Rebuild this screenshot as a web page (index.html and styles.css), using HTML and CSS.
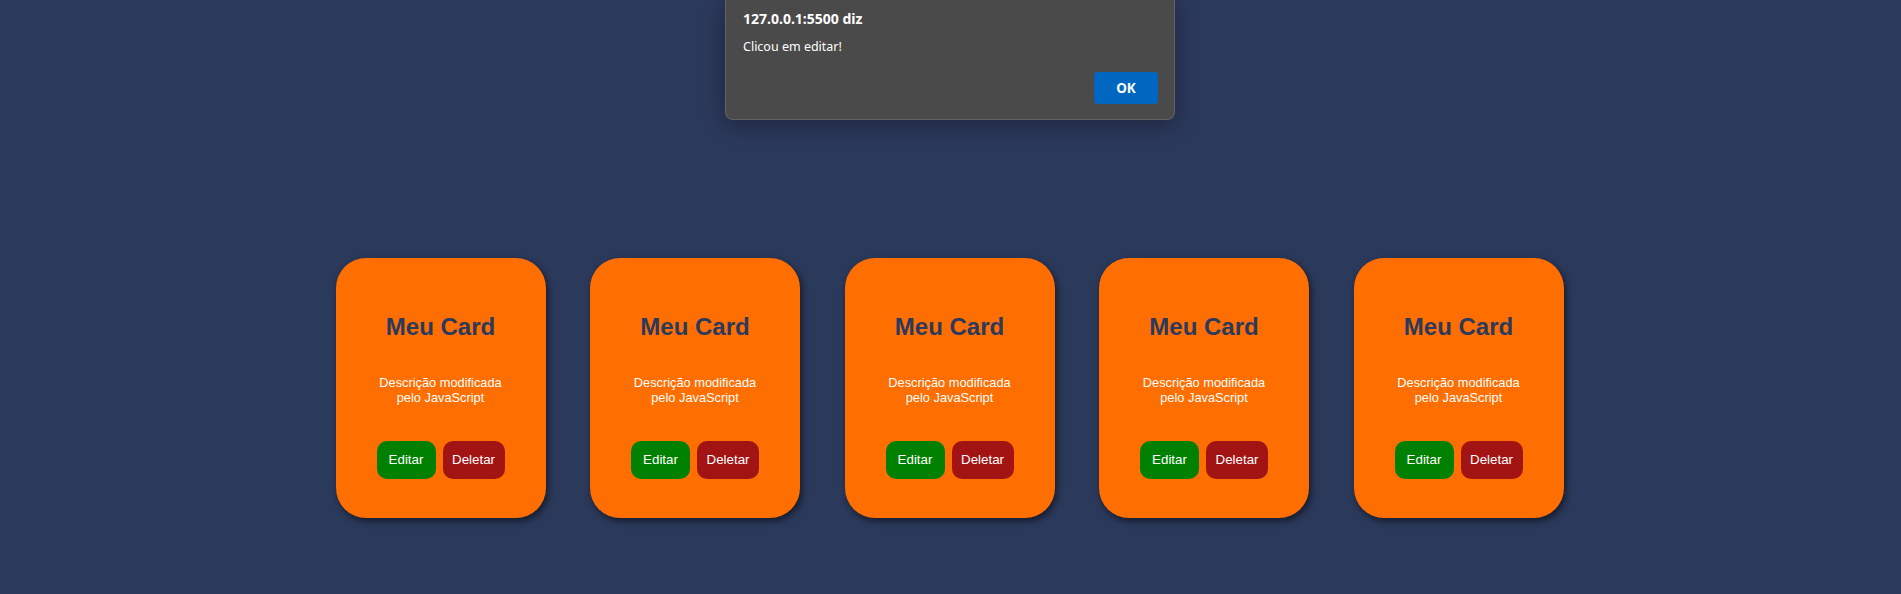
FILE: index.html
```html
<!DOCTYPE html>
<html lang="pt-BR">
<head>
<meta charset="utf-8">
<title>Cards</title>
<link rel="stylesheet" href="styles.css">
</head>
<body>
  <div class="dialog">
    <div class="dialog-title">127.0.0.1:5500 diz</div>
    <div class="dialog-msg">Clicou em editar!</div>
    <div class="dialog-actions"><button class="dialog-ok">OK</button></div>
  </div>
  <main class="cards">
    <div class="card">
      <h2 class="card-title">Meu Card</h2>
      <p class="card-desc">Descrição modificada pelo JavaScript</p>
      <div class="card-actions"><button class="btn btn-edit">Editar</button><button class="btn btn-delete">Deletar</button></div>
    </div>
    <div class="card">
      <h2 class="card-title">Meu Card</h2>
      <p class="card-desc">Descrição modificada pelo JavaScript</p>
      <div class="card-actions"><button class="btn btn-edit">Editar</button><button class="btn btn-delete">Deletar</button></div>
    </div>
    <div class="card">
      <h2 class="card-title">Meu Card</h2>
      <p class="card-desc">Descrição modificada pelo JavaScript</p>
      <div class="card-actions"><button class="btn btn-edit">Editar</button><button class="btn btn-delete">Deletar</button></div>
    </div>
    <div class="card">
      <h2 class="card-title">Meu Card</h2>
      <p class="card-desc">Descrição modificada pelo JavaScript</p>
      <div class="card-actions"><button class="btn btn-edit">Editar</button><button class="btn btn-delete">Deletar</button></div>
    </div>
    <div class="card">
      <h2 class="card-title">Meu Card</h2>
      <p class="card-desc">Descrição modificada pelo JavaScript</p>
      <div class="card-actions"><button class="btn btn-edit">Editar</button><button class="btn btn-delete">Deletar</button></div>
    </div>
  </main>
</body>
</html>
```

FILE: styles.css
```css
html, body {
  margin: 0;
  padding: 0;
}
body {
  background: #2b395b;
  min-height: 100vh;
  font-family: "Liberation Sans", Arial, sans-serif;
  position: relative;
  overflow: hidden;
}
.cards {
  display: flex;
  justify-content: center;
  gap: 44.5px;
  padding-top: 258px;
  padding-right: 2px;
}
.card {
  box-sizing: border-box;
  width: 210px;
  height: 260px;
  background: #ff6e00;
  border-radius: 30px;
  padding: 55px 38px 0;
  text-align: center;
  box-shadow: 2px 3px 7px rgba(0, 0, 0, 0.55);
  display: flex;
  flex-direction: column;
  align-items: center;
}
.card-title {
  margin: 0;
  font-size: 24px;
  line-height: 28px;
  font-weight: bold;
  color: #2b3a5c;
}
.card-desc {
  margin: 34px 0 0;
  font-size: 12.8px;
  line-height: 15px;
  color: #ffffff;
}
.card-actions {
  display: flex;
  gap: 7px;
  margin-top: 35.5px;
}
.btn {
  font-family: "Liberation Sans", Arial, sans-serif;
  font-size: 13.33px;
  color: #ffffff;
  border: none;
  height: 38px;
  padding: 0 12px;
  border-radius: 10px;
  display: flex;
  align-items: center;
  justify-content: center;
}
.btn-edit {
  background: #008000;
  width: 59px;
}
.btn-delete {
  background: #a21414;
  width: 62px;
}
.dialog {
  position: absolute;
  top: 0;
  left: 725px;
  width: 450px;
  height: 120px;
  box-sizing: border-box;
  background: #4a4a4a;
  border: 1px solid #636363;
  border-top: none;
  border-radius: 0 0 8px 8px;
  box-shadow: 0 4px 22px rgba(0, 0, 0, 0.35);
  padding: 9px 16px 0 17px;
  font-family: "Noto Sans", "Open Sans", sans-serif;
  color: #ffffff;
}
.dialog-title {
  font-size: 14px;
  font-weight: bold;
  line-height: 20px;
}
.dialog-msg {
  margin-top: 9px;
  font-size: 12.5px;
  line-height: 18px;
}
.dialog-actions {
  display: flex;
  justify-content: flex-end;
  margin-top: 16px;
}
.dialog-ok {
  width: 64px;
  height: 32px;
  background: #0067c0;
  color: #ffffff;
  border: none;
  border-radius: 4px;
  font-family: "Noto Sans", "Open Sans", sans-serif;
  font-size: 13.5px;
  font-weight: bold;
}
```
